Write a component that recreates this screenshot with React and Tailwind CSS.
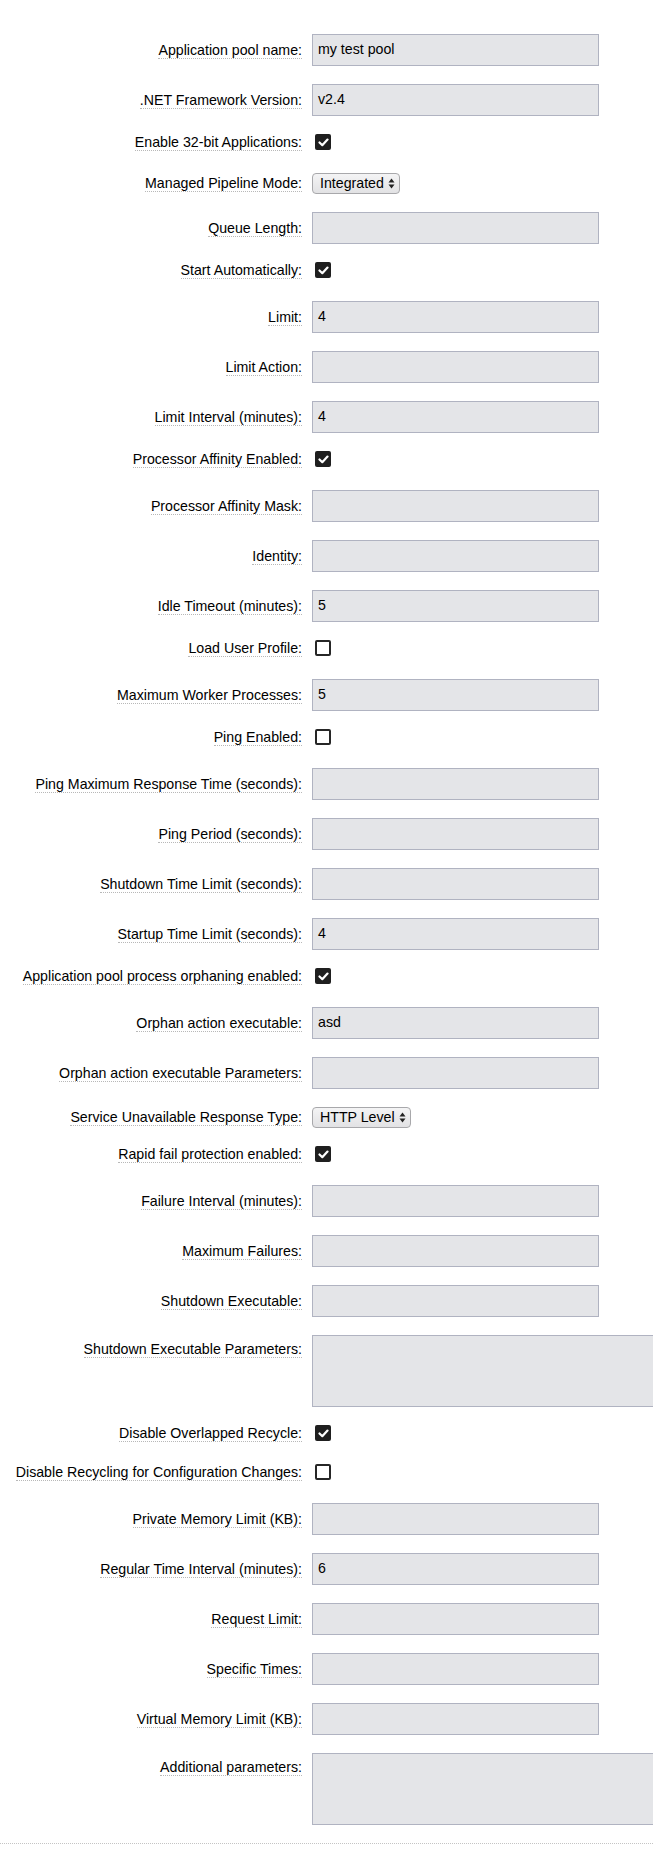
import React from "react";

const fields = [
  { label: "Application pool name:", type: "text", value: "my test pool" },
  { label: ".NET Framework Version:", type: "text", value: "v2.4" },
  { label: "Enable 32-bit Applications:", type: "check", value: true },
  { label: "Managed Pipeline Mode:", type: "select", value: "Integrated" },
  { label: "Queue Length:", type: "text", value: "" },
  { label: "Start Automatically:", type: "check", value: true },
  { label: "Limit:", type: "text", value: "4" },
  { label: "Limit Action:", type: "text", value: "" },
  { label: "Limit Interval (minutes):", type: "text", value: "4" },
  { label: "Processor Affinity Enabled:", type: "check", value: true },
  { label: "Processor Affinity Mask:", type: "text", value: "" },
  { label: "Identity:", type: "text", value: "" },
  { label: "Idle Timeout (minutes):", type: "text", value: "5" },
  { label: "Load User Profile:", type: "check", value: false },
  { label: "Maximum Worker Processes:", type: "text", value: "5" },
  { label: "Ping Enabled:", type: "check", value: false },
  { label: "Ping Maximum Response Time (seconds):", type: "text", value: "" },
  { label: "Ping Period (seconds):", type: "text", value: "" },
  { label: "Shutdown Time Limit (seconds):", type: "text", value: "" },
  { label: "Startup Time Limit (seconds):", type: "text", value: "4" },
  { label: "Application pool process orphaning enabled:", type: "check", value: true },
  { label: "Orphan action executable:", type: "text", value: "asd" },
  { label: "Orphan action executable Parameters:", type: "text", value: "" },
  { label: "Service Unavailable Response Type:", type: "select", value: "HTTP Level" },
  { label: "Rapid fail protection enabled:", type: "check", value: true },
  { label: "Failure Interval (minutes):", type: "text", value: "" },
  { label: "Maximum Failures:", type: "text", value: "" },
  { label: "Shutdown Executable:", type: "text", value: "" },
  { label: "Shutdown Executable Parameters:", type: "area", value: "" },
  { label: "Disable Overlapped Recycle:", type: "check", value: true },
  { label: "Disable Recycling for Configuration Changes:", type: "check", value: false },
  { label: "Private Memory Limit (KB):", type: "text", value: "" },
  { label: "Regular Time Interval (minutes):", type: "text", value: "6" },
  { label: "Request Limit:", type: "text", value: "" },
  { label: "Specific Times:", type: "text", value: "" },
  { label: "Virtual Memory Limit (KB):", type: "text", value: "" },
  { label: "Additional parameters:", type: "area", value: "" },
];

function Label({ children, top }) {
  return (
    <div className={`w-[302px] shrink-0 flex justify-end ${top ? "pt-[6px]" : ""}`}>
      <span className="leading-[16px] border-b border-dotted border-[#b8b8b8] whitespace-nowrap">
        {children}
      </span>
    </div>
  );
}

function Checkbox({ checked }) {
  if (checked) {
    return (
      <div className="w-4 h-4 rounded-[2px] bg-[#1f1f1f] flex items-center justify-center">
        <svg width="11" height="9" viewBox="0 0 11 9" fill="none">
          <path d="M1.5 4.5 L4.3 7.2 L9.5 1.6" stroke="white" strokeWidth="2.2" strokeLinecap="round" strokeLinejoin="round" />
        </svg>
      </div>
    );
  }
  return <div className="w-4 h-4 rounded-[2px] border-2 border-[#262626] bg-white" />;
}

function Select({ value }) {
  return (
    <div className="h-[21px] inline-flex items-center rounded-[4px] border border-[#a8a8ab] bg-gradient-to-b from-[#f4f4f5] to-[#e2e2e4] pl-[7px] pr-[4px] leading-none">
      <span>{value}</span>
      <svg className="ml-[4px]" width="7" height="11" viewBox="0 0 7 11">
        <path d="M3.5 0.5 L6.5 4.5 L0.5 4.5 Z" fill="#222" />
        <path d="M3.5 10.5 L6.5 6.5 L0.5 6.5 Z" fill="#222" />
      </svg>
    </div>
  );
}

function Row({ field }) {
  if (field.type === "check") {
    return (
      <div className="flex items-start h-[21px] mb-[18px]">
        <Label>{field.label}</Label>
        <div className="ml-[13px]">
          <Checkbox checked={field.value} />
        </div>
      </div>
    );
  }
  if (field.type === "select") {
    return (
      <div className="flex items-center h-[21px] mb-[18px]">
        <Label>{field.label}</Label>
        <div className="ml-[10px]">
          <Select value={field.value} />
        </div>
      </div>
    );
  }
  if (field.type === "area") {
    return (
      <div className="flex items-start mb-[18px]">
        <Label top>{field.label}</Label>
        <div className="ml-[10px] w-[380px] h-[72px] shrink-0 border border-[#b0b3c1] bg-[#e4e5e8]" />
      </div>
    );
  }
  return (
    <div className="flex items-center h-[32px] mb-[18px]">
      <Label>{field.label}</Label>
      <div className="ml-[10px] w-[287px] h-[32px] shrink-0 border border-[#b0b3c1] bg-[#e4e5e8] flex items-center pl-[5px]">
        {field.value}
      </div>
    </div>
  );
}

export default function App() {
  return (
    <div className="w-full min-h-[1856px] overflow-hidden bg-white text-black text-[14.2px] font-['Liberation_Sans',Arial,sans-serif]">
      <div className="pt-[34px]">
        {fields.map((f, i) => (
          <Row key={i} field={f} />
        ))}
      </div>
      <div className="border-t border-dotted border-[#c4c4c4]" />
    </div>
  );
}
